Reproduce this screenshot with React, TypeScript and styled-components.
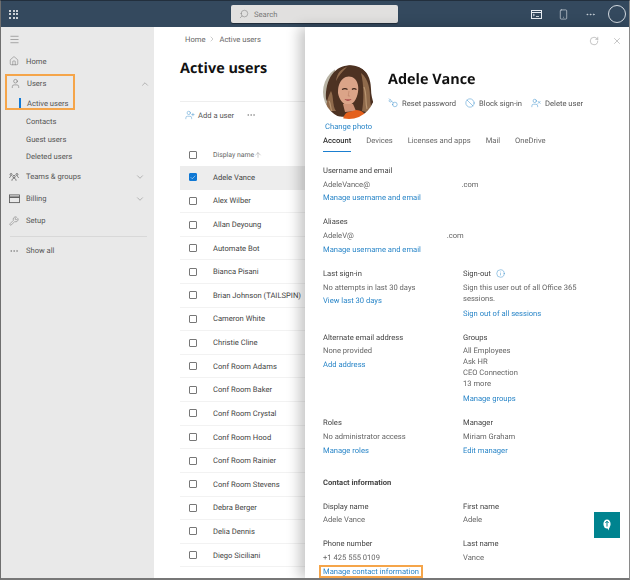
import React from "react";
import styled, { createGlobalStyle } from "styled-components";
import {
  ArrowUp,
  Ban,
  ChevronDown,
  ChevronRight,
  ChevronUp,
  Home,
  Info,
  Key,
  Menu,
  MoreHorizontal,
  RotateCw,
  Search,
  Smartphone,
  User,
  UserPlus,
  UserX,
  Wrench,
  X,
  Check,
} from "lucide-react";

const GlobalStyle = createGlobalStyle`
  html, body {
    margin: 0;
    padding: 0;
    background: #fff;
  }
  * {
    box-sizing: border-box;
  }
`;

const Page = styled.div`
  width: 630px;
  height: 580px;
  display: flex;
  flex-direction: column;
  overflow: hidden;
  position: relative;
  font-family: Roboto, "Open Sans", "Liberation Sans", sans-serif;
  font-size: 7.6px;
  text-rendering: geometricPrecision;
  color: #444;
  border-left: 1px solid #6f6f6f;
  border-right: 1px solid #8a8a8a;
  border-bottom: 2px solid #777;
  border-top: 1px solid #222f3d;
  filter: blur(0.3px);
`;

const TopBar = styled.header`
  height: 26px;
  flex: none;
  background: #34495e;
  display: flex;
  align-items: center;
  color: #e8edf2;
`;

const Waffle = styled.div`
  width: 9px;
  height: 9px;
  margin-left: 8px;
  display: grid;
  grid-template-columns: repeat(3, 2px);
  grid-auto-rows: 2px;
  gap: 1.5px;
  span {
    background: #fff;
    border-radius: 50%;
  }
`;

const SearchBox = styled.div`
  width: 167px;
  height: 18px;
  margin-left: 213px;
  background: #e1e0df;
  border-radius: 2px;
  box-shadow: 0 1px 1px rgba(0, 0, 0, 0.4);
  display: flex;
  align-items: center;
  gap: 5px;
  padding-left: 8px;
  color: #777;
  svg {
    transform: scaleX(-1);
  }
`;

const TopIcons = styled.div`
  margin-left: auto;
  display: flex;
  align-items: center;
  padding-right: 3px;
`;

const TopIcon = styled.div`
  width: 27px;
  display: flex;
  justify-content: center;
`;

const Avatar = styled.div`
  width: 18px;
  height: 18px;
  margin-left: 4px;
  border: 1px solid #d5dbe1;
  border-radius: 50%;
`;

const Body = styled.div`
  flex: 1;
  display: flex;
  min-height: 0;
`;

const Sidebar = styled.nav`
  width: 153px;
  flex: none;
  background: #e9e9e9;
  padding: 7px 5px 0 3px;
`;

const MenuButton = styled.div`
  height: 10px;
  padding-left: 5px;
  color: #555;
  display: flex;
  align-items: center;
  margin-bottom: 6px;
`;

const NavRow = styled.div<{ $h?: number; $mb?: number }>`
  height: ${(p) => p.$h ?? 22}px;
  margin-bottom: ${(p) => p.$mb ?? 0}px;
  display: flex;
  align-items: center;
  color: #555;
`;

const NavIcon = styled.span`
  width: 22px;
  padding-left: 5px;
  flex: none;
  display: flex;
  color: #555;
`;

const NavChevron = styled.span`
  margin-left: auto;
  padding-right: 4px;
  display: flex;
  color: #666;
`;

const Highlight = styled.div`
  border: 2px solid #f5a54a;
  width: 70px;
  height: 36px;
  margin: 2px 0 3px 1px;
`;

const HighlightInner = styled.div`
  margin-left: -2px;
  width: 149px;
`;

const SubRow = styled.div<{ $active?: boolean }>`
  height: 17.6px;
  padding-left: 22px;
  display: flex;
  align-items: center;
  color: #555;
  position: relative;
  ${(p) =>
    p.$active &&
    `&::before {
      content: "";
      position: absolute;
      left: 14px;
      top: 3px;
      width: 2px;
      height: 10px;
      background: #0f78d4;
    }`}
`;

const NavDivider = styled.div`
  height: 1px;
  background: #d8d8d8;
  margin: 4px 2px 3px 6px;
`;

const Main = styled.main`
  width: 151px;
  flex: none;
  background: #fff;
  overflow: hidden;
`;

const Crumbs = styled.div`
  display: flex;
  align-items: center;
  gap: 3px;
  padding: 6px 0 0 31px;
  height: 18px;
  color: #666;
`;

const PageTitle = styled.h1`
  margin: 14px 0 0 26px;
  font-family: "Open Sans", sans-serif;
  font-size: 14.4px;
  line-height: 20px;
  font-weight: 700;
  color: #111;
  white-space: nowrap;
`;

const ToolRow = styled.div`
  margin: 22px 0 0 26px;
  border-top: 1px solid #eee;
  height: 27px;
  display: flex;
  align-items: center;
  gap: 3px;
  color: #555;
  padding-left: 5px;
  svg:last-child {
    margin-left: 9px;
  }
`;

const TableHead = styled.div`
  margin: 15px 0 0 26px;
  height: 23px;
  display: flex;
  align-items: center;
  font-size: 6.9px;
  color: #666;
`;

const Box = styled.span<{ $on?: boolean }>`
  width: 8px;
  height: 8px;
  margin: 0 16px 0 9px;
  flex: none;
  display: flex;
  align-items: center;
  justify-content: center;
  border: 1px solid ${(p) => (p.$on ? "#0f78d4" : "#777")};
  background: ${(p) => (p.$on ? "#0f78d4" : "#fff")};
  color: #fff;
  border-radius: 1px;
`;

const UserRow = styled.div<{ $on?: boolean }>`
  margin-left: 26px;
  height: 23.62px;
  display: flex;
  align-items: center;
  white-space: nowrap;
  color: #444;
  background: ${(p) => (p.$on ? "#ededed" : "#fff")};
  border-bottom: 1px solid ${(p) => (p.$on ? "#ededed" : "#f2f2f2")};
`;

const Panel = styled.aside`
  flex: 1;
  background: #fff;
  box-shadow: -6px 0 12px rgba(0, 0, 0, 0.22);
  padding: 9px 0 0 18px;
  position: relative;
  min-width: 0;
`;

const PanelTools = styled.div`
  height: 10px;
  display: flex;
  justify-content: flex-end;
  align-items: center;
  gap: 13px;
  padding-right: 7px;
  color: #777;
`;

const Identity = styled.div`
  display: flex;
  margin-top: 19px;
`;

const PhotoCol = styled.div`
  width: 65px;
  flex: none;
`;

const Photo = styled.svg`
  display: block;
  width: 52px;
  height: 54px;
`;

const ChangePhoto = styled.a`
  display: block;
  margin: 2px 0 0 2px;
  line-height: 11px;
  color: #2a86c8;
  white-space: nowrap;
`;

const NameCol = styled.div`
  padding-top: 5px;
`;

const Name = styled.h2`
  margin: 0;
  font-family: "Open Sans", sans-serif;
  font-size: 14.4px;
  line-height: 20px;
  font-weight: 700;
  color: #111;
  white-space: nowrap;
`;

const Actions = styled.div`
  display: flex;
  gap: 9px;
  margin-top: 8px;
  white-space: nowrap;
  color: #555;
`;

const Action = styled.span`
  display: flex;
  align-items: center;
  gap: 4px;
  svg {
    color: #2a86c8;
  }
`;

const KeyIcon = styled(Key)`
  transform: scaleX(-1);
`;

const Tabs = styled.div`
  display: flex;
  gap: 15px;
  margin-top: 0;
  height: 22px;
`;

const Tab = styled.span<{ $on?: boolean }>`
  height: 20px;
  line-height: 14px;
  padding-top: 2px;
  color: ${(p) => (p.$on ? "#333" : "#666")};
  font-weight: ${(p) => (p.$on ? 500 : 400)};
  border-bottom: ${(p) => (p.$on ? "1px solid #1b7fd0" : "none")};
`;

const Grid = styled.div`
  display: grid;
  grid-template-columns: 140px 1fr;
  row-gap: 10.3px;
  margin-top: 10px;
`;

const Wide = styled.div`
  grid-column: 1 / -1;
`;

const Label = styled.div`
  line-height: 13.7px;
  color: #444;
  display: flex;
  align-items: center;
  gap: 5px;
`;

const Value = styled.div`
  line-height: 13.7px;
  color: #666;
  white-space: nowrap;
`;

const Lines = styled.div`
  line-height: 11px;
  color: #666;
  margin-top: 1px;
  margin-bottom: 3px;
  white-space: nowrap;
`;

const Redacted = styled.span<{ $w: number }>`
  display: inline-block;
  width: ${(p) => p.$w}px;
`;

const Link = styled.a`
  display: block;
  line-height: 13.7px;
  color: #2a86c8;
  white-space: nowrap;
`;

const BoxedLink = styled(Link)`
  display: inline-block;
  border: 2px solid #f5a54a;
  margin: 0 0 0 -4px;
  padding: 0 2px;
  height: 13px;
  line-height: 9px;
`;

const SectionTitle = styled.div`
  grid-column: 1 / -1;
  margin-top: 8px;
  font-weight: 700;
  line-height: 13.7px;
  color: #444;
`;

const ChatButton = styled.button`
  position: absolute;
  left: 593px;
  top: 511px;
  width: 26px;
  height: 26px;
  border: 0;
  padding: 0;
  background: #00838f;
  display: flex;
  align-items: center;
  justify-content: center;
`;

const names = [
  "Alex Wilber",
  "Allan Deyoung",
  "Automate Bot",
  "Bianca Pisani",
  "Brian Johnson (TAILSPIN)",
  "Cameron White",
  "Christie Cline",
  "Conf Room Adams",
  "Conf Room Baker",
  "Conf Room Crystal",
  "Conf Room Hood",
  "Conf Room Rainier",
  "Conf Room Stevens",
  "Debra Berger",
  "Delia Dennis",
  "Diego Siciliani",
];

const Portrait = () => (
  <Photo viewBox="0 0 52 54">
    <defs>
      <clipPath id="round">
        <ellipse cx="26" cy="27" rx="26" ry="27" />
      </clipPath>
      <filter id="soft">
        <feGaussianBlur stdDeviation="0.7" />
      </filter>
    </defs>
    <g clipPath="url(#round)">
      <rect width="52" height="54" fill="#fff" />
      <rect x="0" y="0" width="12" height="40" fill="#b9b4a5" />
      <g filter="url(#soft)">
        <path d="M3 34C2 14 12 0 28 0c14 0 20 12 20 24 0 12 6 18 2 24-4 5-38 6-44 0-2-4 0-8-3-14z" fill="#4e3222" />
        <path d="M38 8c8 6 9 18 9 24 0 8 3 12 0 16l-8-2c2-10 2-26-1-38zM8 26c3 6 1 14 5 20l-9 0c-2-6 1-14 4-20zM24 2c-6 2-10 6-11 14 3-6 7-10 11-14z" fill="#8f6a4c" />
        <path d="M41 22c3 8 1 14 3 22M6 36c2 3 1 7 3 10" stroke="#b8946f" strokeWidth="1.2" fill="none" />
        <path d="M16 20c2-7 8-10 13-8 5 2 7 8 6 15-1 7-5 13-10 13-5 0-9-6-10-12 0-3 0-5 1-8z" fill="#dba488" />
        <path d="M19 24.5c2-1 4-1 5.5 0M29 24.5c1-1 3-1 4.5 0" stroke="#3d251a" strokeWidth="1.2" fill="none" />
        <path d="M26 26l-.8 5h1.8" stroke="#b97f65" strokeWidth="0.6" fill="none" />
        <path d="M21.5 34c2 .8 5 .8 7 0-1 2-5.5 2.5-7 0z" fill="#9a2f38" />
        <path d="M20 39l10 0 3 7-11 1z" fill="#cf9478" />
        <path d="M20 54c1-4 3-7 6-7l7-2c6 0 10 4 12 9z" fill="#e4601f" />
      </g>
    </g>
  </Photo>
);

const TeamsIcon = () => (
  <svg width="10" height="10" viewBox="0 0 12 12" fill="none" stroke="#555" strokeWidth="0.9">
    <circle cx="2.5" cy="3" r="1.2" />
    <circle cx="9.5" cy="3" r="1.2" />
    <circle cx="6" cy="5.5" r="1.4" />
    <path d="M0.5 7l1.5-2M11.5 7L10 5M3.5 10.5c0-4 5-4 5 0" />
  </svg>
);

const BillingIcon = () => (
  <svg width="11" height="10" viewBox="0 0 12 11" fill="none" stroke="#555" strokeWidth="0.9">
    <rect x="0.5" y="1" width="11" height="8.5" />
    <path d="M0.5 3.5h11" strokeWidth="1.6" />
  </svg>
);

const ScreenIcon = () => (
  <svg width="11" height="9" viewBox="0 0 11 9" fill="none" stroke="#e8edf2" strokeWidth="1">
    <rect x="0.5" y="0.5" width="10" height="8" />
    <path d="M0.5 2.5h10" />
    <path d="M2 4l1.5 1L2 6M5 6.5h3" strokeWidth="0.8" />
  </svg>
);

const ChatIcon = () => (
  <svg width="10" height="12" viewBox="0 0 10 12">
    <ellipse cx="5" cy="5" rx="3.6" ry="4.6" fill="#fff" />
    <path d="M5 8l1.6 3.4L7.4 8z" fill="#fff" />
    <path d="M5 2.2v5.4M3.4 4L5 2.2 6.6 4" stroke="#00838f" strokeWidth="1" fill="none" />
  </svg>
);

export default function App() {
  return (
    <Page>
      <GlobalStyle />
      <TopBar>
        <Waffle>
          {Array.from({ length: 9 }).map((_, i) => (
            <span key={i} />
          ))}
        </Waffle>
        <SearchBox>
          <Search size={10} strokeWidth={1.2} />
          Search
        </SearchBox>
        <TopIcons>
          <TopIcon>
            <ScreenIcon />
          </TopIcon>
          <TopIcon>
            <Smartphone size={11} strokeWidth={1.3} />
          </TopIcon>
          <TopIcon>
            <MoreHorizontal size={11} strokeWidth={1.3} />
          </TopIcon>
          <Avatar />
        </TopIcons>
      </TopBar>
      <Body>
        <Sidebar>
          <MenuButton>
            <Menu size={11} strokeWidth={1} />
          </MenuButton>
          <NavRow>
            <NavIcon>
              <Home size={10} strokeWidth={1} />
            </NavIcon>
            Home
          </NavRow>
          <Highlight>
            <HighlightInner>
              <NavRow $h={15} $mb={4}>
                <NavIcon>
                  <User size={11} strokeWidth={1} />
                </NavIcon>
                Users
                <NavChevron>
                  <ChevronUp size={10} strokeWidth={1} />
                </NavChevron>
              </NavRow>
              <SubRow $active>Active users</SubRow>
            </HighlightInner>
          </Highlight>
          <SubRow>Contacts</SubRow>
          <SubRow>Guest users</SubRow>
          <SubRow>Deleted users</SubRow>
          <NavRow>
            <NavIcon>
              <TeamsIcon />
            </NavIcon>
            Teams &amp; groups
            <NavChevron>
              <ChevronDown size={10} strokeWidth={1} />
            </NavChevron>
          </NavRow>
          <NavRow>
            <NavIcon>
              <BillingIcon />
            </NavIcon>
            Billing
            <NavChevron>
              <ChevronDown size={10} strokeWidth={1} />
            </NavChevron>
          </NavRow>
          <NavRow>
            <NavIcon>
              <Wrench size={10} strokeWidth={1} />
            </NavIcon>
            Setup
          </NavRow>
          <NavDivider />
          <NavRow>
            <NavIcon>
              <MoreHorizontal size={10} strokeWidth={1} />
            </NavIcon>
            Show all
          </NavRow>
        </Sidebar>
        <Main>
          <Crumbs>
            Home
            <ChevronRight size={8} strokeWidth={1} />
            Active users
          </Crumbs>
          <PageTitle>Active users</PageTitle>
          <ToolRow>
            <UserPlus size={10} strokeWidth={1} color="#2a86c8" />
            Add a user
            <MoreHorizontal size={10} strokeWidth={1} />
          </ToolRow>
          <TableHead>
            <Box />
            Display name
            <ArrowUp size={8} strokeWidth={1} />
          </TableHead>
          <UserRow $on>
            <Box $on>
              <Check size={7} strokeWidth={2} />
            </Box>
            Adele Vance
          </UserRow>
          {names.map((n) => (
            <UserRow key={n}>
              <Box />
              {n}
            </UserRow>
          ))}
        </Main>
        <Panel>
          <PanelTools>
            <RotateCw size={10} strokeWidth={1} />
            <X size={10} strokeWidth={1} />
          </PanelTools>
          <Identity>
            <PhotoCol>
              <Portrait />
              <ChangePhoto>Change photo</ChangePhoto>
            </PhotoCol>
            <NameCol>
              <Name>Adele Vance</Name>
              <Actions>
                <Action>
                  <KeyIcon size={10} strokeWidth={1.1} />
                  Reset password
                </Action>
                <Action>
                  <Ban size={10} strokeWidth={1.1} />
                  Block sign-in
                </Action>
                <Action>
                  <UserX size={10} strokeWidth={1.1} />
                  Delete user
                </Action>
              </Actions>
            </NameCol>
          </Identity>
          <Tabs>
            <Tab $on>Account</Tab>
            <Tab>Devices</Tab>
            <Tab>Licenses and apps</Tab>
            <Tab>Mail</Tab>
            <Tab>OneDrive</Tab>
          </Tabs>
          <Grid>
            <Wide>
              <Label>Username and email</Label>
              <Value>
                AdeleVance@
                <Redacted $w={91.5} />
                .com
              </Value>
              <Link>Manage username and email</Link>
            </Wide>
            <Wide>
              <Label>Aliases</Label>
              <Value>
                AdeleV@
                <Redacted $w={93} />
                .com
              </Value>
              <Link>Manage username and email</Link>
            </Wide>
            <div>
              <Label>Last sign-in</Label>
              <Value>No attempts in last 30 days</Value>
              <Link>View last 30 days</Link>
            </div>
            <div>
              <Label>
                Sign-out
                <Info size={9} strokeWidth={1.2} color="#2a86c8" />
              </Label>
              <Lines>
                Sign this user out of all Office 365
                <br />
                sessions.
              </Lines>
              <Link>Sign out of all sessions</Link>
            </div>
            <div>
              <Label>Alternate email address</Label>
              <Value>None provided</Value>
              <Link>Add address</Link>
            </div>
            <div>
              <Label>Groups</Label>
              <Lines>
                All Employees
                <br />
                Ask HR
                <br />
                CEO Connection
                <br />
                13 more
              </Lines>
              <Link>Manage groups</Link>
            </div>
            <div>
              <Label>Roles</Label>
              <Value>No administrator access</Value>
              <Link>Manage roles</Link>
            </div>
            <div>
              <Label>Manager</Label>
              <Value>Miriam Graham</Value>
              <Link>Edit manager</Link>
            </div>
            <SectionTitle>Contact information</SectionTitle>
            <div>
              <Label>Display name</Label>
              <Value>Adele Vance</Value>
            </div>
            <div>
              <Label>First name</Label>
              <Value>Adele</Value>
            </div>
            <div>
              <Label>Phone number</Label>
              <Value>+1 425 555 0109</Value>
              <BoxedLink>Manage contact information</BoxedLink>
            </div>
            <div>
              <Label>Last name</Label>
              <Value>Vance</Value>
            </div>
          </Grid>
        </Panel>
      </Body>
      <ChatButton>
        <ChatIcon />
      </ChatButton>
    </Page>
  );
}
